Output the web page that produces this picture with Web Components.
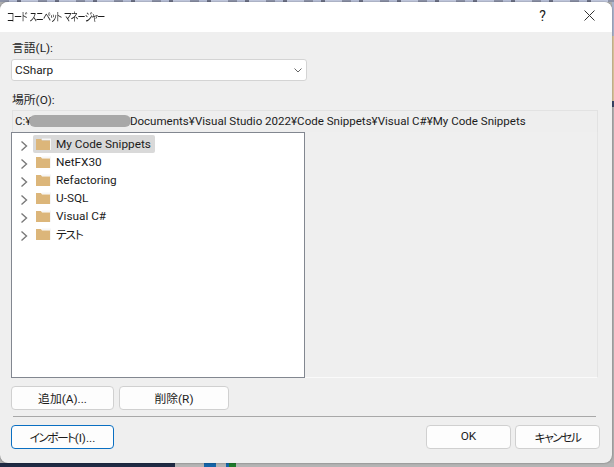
<!DOCTYPE html>
<html lang="ja">
<head>
<meta charset="utf-8">
<title>コード スニペット マネージャー</title>
<style>
  html, body { margin: 0; height: 100%; }
  body {
    overflow: hidden;
    font: 12px "Noto Sans CJK JP", "Noto Sans", sans-serif;
    /* desktop behind the dialog: only thin strips stay visible */
    background:
      linear-gradient(90deg, transparent 612px, #aab4cc 612px) 0 0 / 100% 36px no-repeat,
      linear-gradient(90deg, transparent 612px, #d9c49c 612px) 0 36px / 100% 65px no-repeat,
      linear-gradient(90deg, transparent 612px, #3a4668 612px) 0 101px / 100% 6px no-repeat,
      linear-gradient(90deg, #1f2a44 175px, #b4b4b4 175px, #b4b4b4 204px, #1464a8 204px, #1464a8 216px, #b4b4b4 216px, #b4b4b4 226px, #1464a8 226px, #1464a8 229px, #1f7a2c 229px, #1f7a2c 236px, #b4b4b4 236px) 0 463px / 100% 4px no-repeat,
      #b0b0b0;
  }
</style>
</head>
<body>
<desktop-strip></desktop-strip>
<snippet-dialog>
  <tree-node label="My Code Snippets" selected></tree-node>
  <tree-node label="NetFX30"></tree-node>
  <tree-node label="Refactoring"></tree-node>
  <tree-node label="U-SQL"></tree-node>
  <tree-node label="Visual C#"></tree-node>
  <tree-node label="テスト" tight></tree-node>
</snippet-dialog>

<template id="strip-tpl">
  <style>
    :host {
      display: block; height: 2px;
      background: repeating-linear-gradient(90deg, #8d93a8 0 9px, #b9c1da 9px 17px, #6d7287 17px 21px, #c3cae0 21px 38px);
    }
  </style>
</template>

<template id="node-tpl">
  <style>
    :host { display: flex; align-items: center; height: 18px; }
    .arrow { width: 8px; height: 12px; margin: 3px 5px 0 8px; flex: none; }
    .row { display: flex; align-items: center; height: 18px; padding: 0 4px 0 3px; border-radius: 2px; }
    :host([selected]) .row { background: #d9d9d9; }
    .folder { width: 15px; height: 12px; margin-right: 5px; flex: none; }
    .txt { font: 11.8px "Roboto", "Noto Sans CJK JP", sans-serif; font-feature-settings: "palt"; color: #1c1c1c; white-space: nowrap; }
    :host([tight]) .txt { letter-spacing: -1.3px; padding-bottom: 2px; }
  </style>
  <svg class="arrow" viewBox="0 0 8 12"><path d="M1.5 1.5 6.5 6 1.5 10.5" fill="none" stroke="#7a7a7a" stroke-width="1.4"/></svg>
  <div class="row">
    <svg class="folder" viewBox="0 0 15 12"><path d="M0 1h5l1 1.5h9V12H0z" fill="#dcb67a"/><path d="M6 .5h9v11.5h-1V2H6z" fill="#f6f6f6"/></svg>
    <span class="txt"></span>
  </div>
</template>

<template id="dialog-tpl">
  <style>
    :host { display: block; width: 612px; height: 461px; background: #efefef; border-radius: 8px; overflow: hidden; box-sizing: border-box; color: #1c1c1c; font: 11.8px "Roboto", "Noto Sans CJK JP", sans-serif; font-feature-settings: "palt"; box-shadow: 0 0 2px rgba(0,0,0,.45); }
    .title { height: 30px; background: #fff; display: flex; align-items: center; padding-left: 7px; }
    .title span { padding-bottom: 3px; }
    .caption { flex: 1; }
    .caption b { display: inline-block; font-weight: 400; font-size: 11.5px; letter-spacing: -1px; word-spacing: 2px; transform: scaleX(.7); transform-origin: left center; white-space: nowrap; }
    .help { width: 47px; text-align: center; font-size: 14px; }
    .close { width: 46px; display: flex; justify-content: center; }
    .body { padding: 7px 11px 0; }
    label { display: block; line-height: 18px; padding-left: 1px; }
    .combo { width: 296px; height: 22px; margin-top: 2px; box-sizing: border-box; background: #fff; border: 1px solid #d4d4d4; border-radius: 3px; display: flex; align-items: center; justify-content: space-between; padding: 0 4px 0 3px; }
    .path { height: 22px; margin: 1px 0 0 1px; width: 586px; box-sizing: border-box; background: #eee; border: 1px solid #e2e2e2; border-bottom: 0; display: flex; align-items: center; padding: 0 0 2px 2px; position: relative; white-space: nowrap; font-size: 11.55px; }
    .blur { position: absolute; left: 16px; top: 4px; width: 102px; height: 12px; background: #a8a8a8; border-radius: 6px; filter: blur(.5px); }
    .panes { display: flex; height: 246px; }
    .tree { width: 294px; height: 246px; box-sizing: border-box; border: 1px solid #828790; background: #fff; padding: 2px 0; }
    .side { width: 293px; box-sizing: border-box; border-bottom: 1px solid #fafafa; border-right: 1px solid #e4e4e4; }
    .row { display: flex; gap: 5px; margin-top: 8px; }
    .sep { height: 1px; background: #a8a8a8; margin: 6px 0 8px 2px; width: 583px; }
    button { height: 24px; box-sizing: border-box; background: #fdfdfd; border: 1px solid #d0d0d0; border-radius: 4px; font: inherit; color: inherit; padding: 0 0 2px; }
    .w1 { width: 103px; }
    .w2 { width: 110px; }
    .w3 { width: 85px; }
    .primary { border-color: #0a6fc2; }
    .spacer { flex: 1; }
    .foot { display: flex; width: 589px; gap: 4px; }
    .kana { letter-spacing: -1.6px; }
  </style>
  <div class="title">
    <span class="caption"><b>コード スニペット マネージャー</b></span>
    <span class="help">?</span>
    <span class="close"><svg width="11" height="11" viewBox="0 0 11 11"><path d="M.5.5l10 10M10.5.5l-10 10" stroke="#333" fill="none"/></svg></span>
  </div>
  <div class="body">
    <label>言語(L):</label>
    <div class="combo"><span>CSharp</span><svg width="8" height="5" viewBox="0 0 8 5"><path d="M.5.5 4 4 7.5.5" fill="none" stroke="#666"/></svg></div>
    <label style="margin-top:10px">場所(O):</label>
    <div class="path"><span>C:¥</span><span class="blur"></span><span style="margin-left:98.5px">Documents¥Visual Studio 2022¥Code Snippets¥Visual C#¥My Code Snippets</span></div>
    <div class="panes">
      <div class="tree"><slot></slot></div>
      <div class="side"></div>
    </div>
    <div class="row">
      <button class="w1">追加(A)...</button>
      <button class="w2">削除(R)</button>
    </div>
    <div class="sep"></div>
    <div class="foot">
      <button class="w1 primary"><span class="kana">インポート</span>(I)...</button>
      <span class="spacer"></span>
      <button class="w3">OK</button>
      <button class="w3"><span class="kana">キャンセル</span></button>
    </div>
  </div>
</template>

<script>
class DesktopStrip extends HTMLElement {
  constructor() {
    super();
    this.attachShadow({ mode: "open" });
    this.shadowRoot.appendChild(document.getElementById("strip-tpl").content.cloneNode(true));
  }
}
class TreeNode extends HTMLElement {
  constructor() {
    super();
    this.attachShadow({ mode: "open" });
    this.shadowRoot.appendChild(document.getElementById("node-tpl").content.cloneNode(true));
  }
  connectedCallback() {
    this.shadowRoot.querySelector(".txt").textContent = this.getAttribute("label");
  }
}
class SnippetDialog extends HTMLElement {
  constructor() {
    super();
    this.attachShadow({ mode: "open" });
    this.shadowRoot.appendChild(document.getElementById("dialog-tpl").content.cloneNode(true));
  }
}
customElements.define("desktop-strip", DesktopStrip);
customElements.define("tree-node", TreeNode);
customElements.define("snippet-dialog", SnippetDialog);
</script>
</body>
</html>
